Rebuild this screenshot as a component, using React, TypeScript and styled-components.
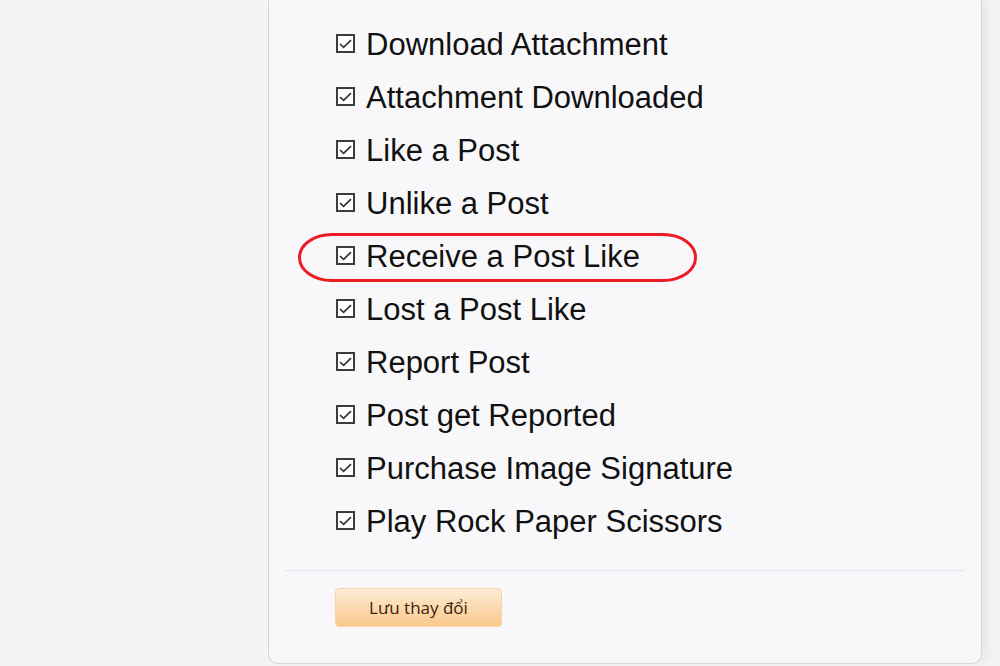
import React from 'react';
import styled, { createGlobalStyle } from 'styled-components';

const items = [
	'Download Attachment',
	'Attachment Downloaded',
	'Like a Post',
	'Unlike a Post',
	'Receive a Post Like',
	'Lost a Post Like',
	'Report Post',
	'Post get Reported',
	'Purchase Image Signature',
	'Play Rock Paper Scissors',
];

const GlobalStyle = createGlobalStyle`
	html, body {
		margin: 0;
		padding: 0;
		background: #f4f4f6;
		font-family: 'Liberation Sans', Arial, sans-serif;
	}
`;

const App = () => {
	return (
		<Page>
			<GlobalStyle />
			<Panel>
				<List>
					{items.map((label) => (
						<Row key={label}>
							<Check>
								<svg width='13' height='10' viewBox='0 0 13 10'>
									<path d='M1 5 L4.6 8.4 L12 1.2' fill='none' stroke='#333' strokeWidth='1.7' />
								</svg>
							</Check>
							<Label>{label}</Label>
							{label === 'Receive a Post Like' && <Marker />}
						</Row>
					))}
				</List>
				<Divider />
				<Footer>
					<SaveButton>Lưu thay đổi</SaveButton>
				</Footer>
			</Panel>
		</Page>
	);
};

const Page = styled.div`
	width: 1000px;
	height: 666px;
	overflow: hidden;
	display: flex;
	align-items: flex-start;
	background: #f4f4f6;
`;

const Panel = styled.div`
	margin-left: 268px;
	width: 714px;
	height: 664px;
	box-sizing: border-box;
	background: #f8f8fa;
	border: 1px solid #d6d6d8;
	border-top: none;
	border-radius: 0 0 10px 10px;
	box-shadow: 6px 0 10px rgba(0, 0, 0, 0.05);
	display: flex;
	flex-direction: column;
`;

const List = styled.div`
	padding: 17px 0 0 67px;
	display: flex;
	flex-direction: column;
`;

const Row = styled.div`
	position: relative;
	height: 53px;
	display: flex;
	align-items: center;
`;

const Check = styled.span`
	width: 19px;
	height: 19px;
	box-sizing: border-box;
	border: 2px solid #3c3c3c;
	background: #fff;
	display: flex;
	align-items: center;
	justify-content: center;
	margin-right: 11px;
`;

const Label = styled.span`
	font-size: 31px;
	color: #111;
	line-height: 1;
	padding-top: 2px;
`;

const Marker = styled.span`
	position: absolute;
	left: -38px;
	top: 4px;
	width: 399px;
	height: 49px;
	border: 3px solid #ec1c24;
	border-radius: 34px / 24px;
	box-sizing: border-box;
`;

const Divider = styled.div`
	margin: 23px 16px 0;
	height: 1px;
	background: #dce8f2;
`;

const Footer = styled.div`
	padding: 17px 0 0 66px;
`;

const SaveButton = styled.button`
	width: 167px;
	height: 39px;
	border: 1px solid #f6d4a6;
	border-radius: 4px;
	background: linear-gradient(#fdecd8, #fbc88a);
	color: #3e220a;
	font-family: 'Open Sans', 'Noto Sans', sans-serif;
	font-size: 17px;
	cursor: pointer;
`;

export default App;
